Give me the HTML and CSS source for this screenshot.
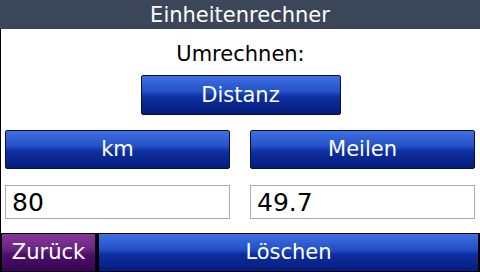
FILE: index.html
```html
<!DOCTYPE html>
<html lang="de">
<head>
<meta charset="utf-8">
<title>Einheitenrechner</title>
<link rel="stylesheet" href="styles.css">
</head>
<body>
<div class="screen">
  <div class="titlebar">Einheitenrechner</div>
  <div class="content">
    <div class="label">Umrechnen:</div>
    <div class="btn btn-type">Distanz</div>
    <div class="row units">
      <div class="btn unit">km</div>
      <div class="btn unit">Meilen</div>
    </div>
    <div class="row values">
      <div class="field">80</div>
      <div class="field">49.7</div>
    </div>
  </div>
  <div class="bottombar">
    <div class="btn back">Zurück</div>
    <div class="btn clear">Löschen</div>
  </div>
</div>
</body>
</html>
```
FILE: styles.css
```css
html, body {
  margin: 0;
  padding: 0;
  background: #fff;
}
.screen {
  width: 480px;
  height: 272px;
  display: flex;
  flex-direction: column;
  font-family: "DejaVu Sans", "Liberation Sans", sans-serif;
  overflow: hidden;
}
.titlebar {
  height: 29px;
  background: #3b4659;
  color: #fff;
  font-size: 21px;
  line-height: 31px;
  text-align: center;
  flex: none;
}
.content {
  flex: 1;
  background: #fff;
  border-left: 1px solid #000;
  display: flex;
  flex-direction: column;
  align-items: center;
}
.label {
  font-size: 21px;
  line-height: 24px;
  color: #000;
  margin-top: 13px;
  height: 24px;
}
.btn {
  box-sizing: border-box;
  color: #fff;
  font-size: 21px;
  text-align: center;
  border: 1px solid #0b1233;
  border-radius: 2px;
  background: linear-gradient(#3f70e2 0%, #2452c8 40%, #0e2fa0 55%, #041c7c 100%);
}
.btn-type {
  width: 200px;
  height: 40px;
  line-height: 38px;
  margin-top: 9px;
}
.row {
  align-self: stretch;
  display: flex;
  justify-content: space-between;
  padding: 0 5px 0 4px;
}
.units {
  margin-top: 15px;
}
.unit {
  width: 225px;
  height: 39px;
  line-height: 37px;
}
.values {
  margin-top: 16px;
}
.field {
  box-sizing: border-box;
  width: 225px;
  height: 34px;
  border: 1px solid #ababab;
  background: #fff;
  color: #000;
  font-size: 25px;
  line-height: 34px;
  padding-left: 6px;
}
.bottombar {
  height: 39px;
  flex: none;
  background: #000;
  display: flex;
  gap: 2px;
  padding: 0 1px;
}
.bottombar .btn {
  height: 39px;
  line-height: 36px;
  border: 1px solid #000;
  border-radius: 0;
}
.back {
  width: 95px;
  background: linear-gradient(#86389a 0%, #6a2682 40%, #4d1068 55%, #380458 100%);
}
.clear {
  flex: 1;
}
```
